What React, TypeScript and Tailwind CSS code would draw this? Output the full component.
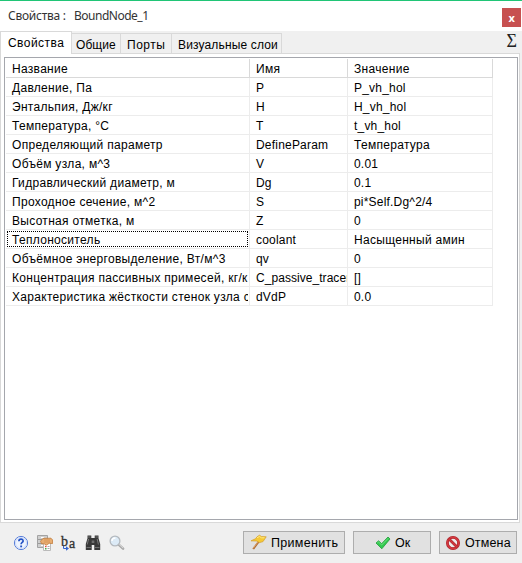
import React from "react";

const rows: [string, string, string][] = [
  ["Давление, Па", "P", "P_vh_hol"],
  ["Энтальпия, Дж/кг", "H", "H_vh_hol"],
  ["Температура, °C", "T", "t_vh_hol"],
  ["Определяющий параметр", "DefineParam", "Температура"],
  ["Объём узла, м^3", "V", "0.01"],
  ["Гидравлический диаметр, м", "Dg", "0.1"],
  ["Проходное сечение, м^2", "S", "pi*Self.Dg^2/4"],
  ["Высотная отметка, м", "Z", "0"],
  ["Теплоноситель", "coolant", "Насыщенный амин"],
  ["Объёмное энерговыделение, Вт/м^3", "qv", "0"],
  ["Концентрация пассивных примесей, кг/к", "C_passive_tracer", "[]"],
  ["Характеристика жёсткости стенок узла с", "dVdP", "0.0"],
];

function Row({ cells, header, focused }: { cells: [string, string, string]; header?: boolean; focused?: boolean }) {
  const line = header ? "border-[#d9d9d9]" : "border-[#ececec]";
  return (
    <div className={`grid h-[19px] w-[487px] grid-cols-[244px_98px_145px] border-b ${line}`}>
      {cells.map((c, i) => (
        <div
          key={i}
          className={`overflow-hidden border-r ${line} ${i === 0 ? "pl-px pr-px" : ""} ${/[а-я]/i.test(c) ? "tracking-[0.3px]" : c.length > 15 ? "tracking-[0.05px]" : "tracking-[0.2px]"}`}
        >
          <div
            className={`overflow-hidden whitespace-nowrap ${
              focused && i === 0
                ? "mt-px h-4 border border-dotted border-black pl-[4px] leading-[17px]"
                : i === 0
                  ? "h-[18px] pl-[5px] pt-px leading-[19px]"
                  : "h-[18px] pl-[6px] pt-px leading-[19px]"
            }`}
          >
            {c}
          </div>
        </div>
      ))}
    </div>
  );
}

function Help() {
  return (
    <svg className="size-4" viewBox="0 0 16 16">
      <circle cx="8" cy="8" r="6.6" fill="#eef4ff" stroke="#5a80da" strokeWidth="1" />
      <circle cx="8" cy="8" r="5.5" fill="none" stroke="#cfdcf8" strokeWidth="1" />
      <path d="M5.9 6.2C6 3.4 10.3 3.6 10.1 6.1C10 7.5 8.1 7.4 8.1 9.3" fill="none" stroke="#2453c4" strokeWidth="1.7" />
      <path d="M7.2 10.5h1.9v1.8H7.2z" fill="#2453c4" />
    </svg>
  );
}

function HandForm() {
  return (
    <svg className="size-4" viewBox="0 0 16 16">
      <path d="M.5 .5h10v12H.5z" fill="#cfcfcf" stroke="#a3a3a3" />
      <path d="M1 4.5h9M1 8.5h9" stroke="#9a9a9a" fill="none" />
      <path d="M4 2.5h3M4 6.5h2M4 10.5h2" stroke="#fff" fill="none" />
      <path d="M6.5 7.5h7v8h-7z" fill="#fff" stroke="#bbb" />
      <path d="M3.5 6.2L6 3.4L14 3.2L15.6 5V8.5L12.2 8.3L9.5 10L7.5 9L4.5 8.6z" fill="#e8ae72" stroke="#c07a38" strokeWidth=".8" />
      <path d="M7 5h6M7 7h6" stroke="#d18d4b" strokeWidth=".7" />
      <path d="M8 11.5h1.5" stroke="#e34b36" strokeWidth="1.4" />
      <path d="M8 13.7h1.5" stroke="#49aa48" strokeWidth="1.4" />
      <path d="M10.5 11.5h2M10.5 13.5h2" stroke="#aaa" />
    </svg>
  );
}

function Rename() {
  return (
    <div className="relative h-4 w-4 font-['Liberation_Serif',serif] text-[14px] leading-none tracking-normal text-[#333] [-webkit-text-stroke:0.3px_#333]">
      <span className="absolute left-0 top-0">b</span>
      <span className="absolute left-[8px] top-[2px]">a</span>
      <svg className="absolute left-[2px] top-[11px] h-[5px] w-[6px]" viewBox="0 0 6 5">
        <path d="M.5 0v2.5h3" fill="none" stroke="#3564ce" />
        <path d="M3 .3L6 2.5L3 4.7z" fill="#3564ce" />
      </svg>
    </div>
  );
}

function Binoculars() {
  return (
    <svg className="size-4" viewBox="0 0 16 16">
      <path d="M2.5 .5h3.8V3h3.4V.5h3.8v2.8L15.2 9v6H9.3v-5H6.7v5H.8V9L2.5 3.3z" fill="#383838" />
      <path d="M3.6 4L2.2 9.5M12.2 4l1.2 5.5" fill="none" stroke="#777" />
      <path d="M6.7 5.5h2.6V8H6.7z" fill="#6e6e6e" />
      <path d="M1.5 12.5h4.5M10 12.5h4.5M3 2h2.6M10.4 2H13" stroke="#7d7d7d" fill="none" strokeWidth=".8" />
    </svg>
  );
}

function Magnifier() {
  return (
    <svg className="size-4" viewBox="0 0 16 16">
      <path d="M9.7 9.7l4.4 4" stroke="#a5a5a5" strokeWidth="2.5" strokeLinecap="round" />
      <path d="M10 9.3l4.2 4" stroke="#ddd" strokeWidth="1" />
      <circle cx="6" cy="6" r="4.9" fill="#dceaf6" stroke="#b4b9be" strokeWidth="1.3" />
      <path d="M3 6C3 4 4.5 3 6.5 3" stroke="#fff" strokeWidth="1.5" fill="none" />
    </svg>
  );
}

function Flag() {
  return (
    <svg className="size-[17px] shrink-0" viewBox="0 0 17 17">
      <path d="M10 6L3.2 15" stroke="#ae6b32" strokeWidth="2" />
      <path d="M9.5 6L3 14.5" stroke="#efb982" strokeWidth=".7" />
      <path d="M7 2.8L9.5 1.2L11.5 2.6L16.2 2.8L13 7.6L9.5 8.6L6.5 7L1 6.8L5.5 4.8z" fill="#f6c935" stroke="#d6a333" strokeWidth=".8" />
      <path d="M7 3.7L9.5 2.5L11.5 3.8L14.5 3.8" stroke="#ffe984" fill="none" />
    </svg>
  );
}

function Check() {
  return (
    <svg className="size-4 shrink-0" viewBox="0 0 16 16">
      <path d="M1 8L3.6 5.8L6.6 8.7L13 2L15 4L6.8 13.8z" fill="#32c94e" stroke="#209a39" strokeWidth=".8" />
      <path d="M2.3 8L3.5 7L6.7 10L13.2 3.3" fill="none" stroke="#79e58a" strokeWidth=".8" />
    </svg>
  );
}

function Cancel() {
  return (
    <svg className="size-4 shrink-0" viewBox="0 0 16 16">
      <circle cx="8" cy="8" r="5.6" fill="#ececec" stroke="#a8242c" strokeWidth="2.8" />
      <circle cx="8" cy="8" r="5.6" fill="none" stroke="#d4383f" strokeWidth="1.7" />
      <path d="M4 4l8 8" stroke="#a8242c" strokeWidth="2.6" />
      <path d="M4 4l8 8" stroke="#d4383f" strokeWidth="1.5" />
    </svg>
  );
}

const button = "flex h-[23px] items-center border border-[#adadad] bg-[#e1e1e1] text-[12.5px] leading-[21px] text-black";
const tab = "h-[20px] whitespace-nowrap border-r border-t border-[#d9d9d9] bg-[#f0f0f0] pt-px leading-[21px]";

export default function App() {
  return (
    <div className="flex h-[563px] w-[522px] flex-col overflow-hidden border-t border-[#20c576] bg-[#f0f0f0] font-['Liberation_Sans',sans-serif] text-[12px] tracking-[0.2px] text-black">
      <div className="flex h-[30px] shrink-0 items-start justify-between bg-white pl-[8px] pr-px pt-[7px] font-['Noto_Sans',sans-serif] text-[12px] tracking-[-0.25px] text-[#333]">
        <div className="flex leading-[16px]">
          <span className="w-[66px]">Свойства :</span>
          <span className="tracking-[-0.5px]">BoundNode_1</span>
        </div>
        <button className="h-[19px] w-[19px] bg-[#c75050] text-[11px] font-bold leading-[16px] text-white">x</button>
      </div>

      <div className="flex h-[22px] shrink-0 items-end text-[12px]">
        <div className="z-10 -mb-px h-[23px] w-[72px] border border-b-0 border-[#d9d9d9] bg-white pl-[7px] leading-[23px] tracking-[0.45px]">Свойства</div>
        <div className={`${tab} w-[49px] pl-[4px] tracking-[0.05px]`}>Общие</div>
        <div className={`${tab} w-[51px] pl-[6px] tracking-[0.5px]`}>Порты</div>
        <div className={`${tab} w-[110px] pl-[6px] tracking-[0.15px]`}>Визуальные слои</div>
        <span className="ml-auto mr-[5px] self-start font-['Liberation_Serif',serif] text-[18px] leading-[21px] tracking-normal text-[#222]">Σ</span>
      </div>

      <div className="h-[470px] w-[520px] shrink-0 border border-[#d9d9d9] bg-white px-[3px] pt-[3px]">
        <div className="h-[463px] w-[514px] border border-[#a5a7ad] bg-white pl-px pt-px">
          <Row header cells={["Название", "Имя", "Значение"]} />
          {rows.map((r, i) => (
            <Row key={r[1]} cells={r} focused={i === 8} />
          ))}
        </div>
      </div>

      <div className="flex h-[40px] shrink-0 items-start pt-[8px]">
        <div className="flex w-[243px] gap-[8px] pl-[13px] pt-[4px]">
          <Help />
          <HandForm />
          <Rename />
          <Binoculars />
          <Magnifier />
        </div>
        <div className="flex gap-[8px]">
          <button className={`${button} w-[102px] gap-[4px] pl-[6px] tracking-[0.3px]`}>
            <Flag />
            <span className="pt-[2px]">Применить</span>
          </button>
          <button className={`${button} w-[78px] gap-[4px] pl-[21px] tracking-normal`}>
            <Check />
            <span className="pt-[2px]">Ок</span>
          </button>
          <button className={`${button} w-[78px] gap-[4px] pl-[5px] tracking-[0.15px]`}>
            <Cancel />
            <span className="pt-[2px]">Отмена</span>
          </button>
        </div>
      </div>
    </div>
  );
}
